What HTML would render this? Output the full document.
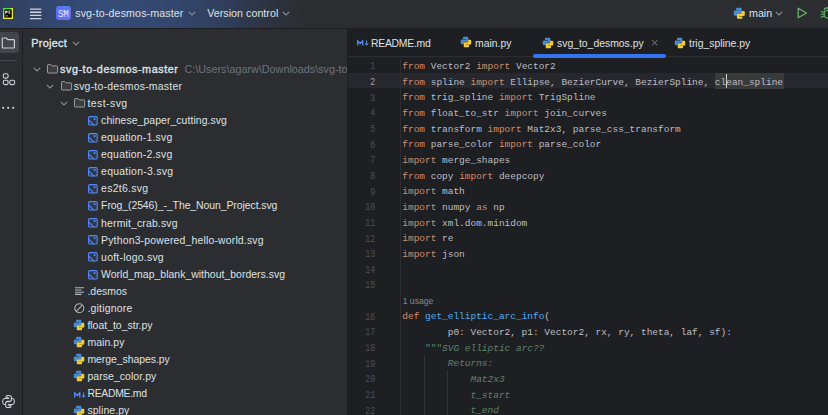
<!DOCTYPE html>
<html><head><meta charset="utf-8">
<style>
*{margin:0;padding:0;box-sizing:border-box}
html,body{width:828px;height:415px;overflow:hidden;background:#1e1f22}
body{position:relative;font-family:"Liberation Sans",sans-serif;color:#dfe1e5}
.abs{position:absolute}
#hdr{left:0;top:0;width:828px;height:29px;background:#2b2d30;overflow:hidden;border-bottom:1px solid #1e1f22}
#hdrgrad{left:0;top:0;width:828px;height:28px;background:radial-gradient(circle 195px at 110px 14px, rgb(53,76,120) 0%, rgb(51,71,110) 30%, rgb(48,64,94) 55%, rgb(45,52,66) 80%, rgb(43,45,48) 100%)}
.ht{position:absolute;font-size:10.7px;color:#dfe1e5;white-space:nowrap;line-height:14px;top:6px}
#strip{left:0;top:29px;width:23px;height:386px;background:#2b2d30;border-right:1px solid #1e1f22}
#proj{left:23px;top:29px;width:324px;height:386px;background:#2b2d30;overflow:hidden}
#edsep{left:347px;top:29px;width:1px;height:386px;background:#1e1f22}
#tabs{left:348px;top:29px;width:480px;height:28px;background:#1e1f22;border-bottom:1px solid #2b2d30}
.tab{position:absolute;top:36.5px;font-size:10.4px;line-height:14px;color:#dfe1e5;white-space:nowrap}
.row{position:absolute;height:17px;line-height:17px;white-space:nowrap;color:#dfe1e5}
.path{color:#6f737a;-webkit-text-stroke:0;font-size:10.8px;margin-left:6px;letter-spacing:0}
#treeclip{position:absolute;left:0;top:0;width:347px;height:415px;overflow:hidden}
.code{position:absolute;left:402.3px;font-family:"Liberation Mono",monospace;font-size:9.48px;white-space:pre;color:#bcbec4;height:15.65px;line-height:15.65px}
.ln{position:absolute;left:348px;width:27.3px;text-align:right;font-family:"Liberation Mono",monospace;font-size:10.5px;transform:scaleX(.79);transform-origin:right center;color:#4b5059;height:15.65px;line-height:15.65px}
.ln.cur{color:#a1a3ab}
.usage{position:absolute;left:402.7px;font-size:8.6px;color:#868a91;height:15.65px;line-height:15.65px}
.k{color:#cf8e6d}
.f{color:#56a8f5}
.d{color:#5f826b;font-style:italic}
.ds{color:#5f826b}
.sel{background:#373b39;position:relative}
.caret{position:absolute;left:5.7px;top:2px;width:1px;height:12px;background:#ced0d6}
#curline{left:348px;top:72.5px;width:480px;height:15.8px;background:#26282e}
#gsep{left:400.4px;top:57px;width:1px;height:358px;background:#2b2d30}
</style></head><body>
<div id="hdr" class="abs">
  <div id="hdrgrad" class="abs"></div>
</div>
<!-- header content -->
<svg width="11" height="11" viewBox="0 0 10 11" style="position:absolute;left:3px;top:8px;width:10px;height:11px"><rect x="0" y="0" width="10" height="11" fill="#ece831"/><path d="M0 0H7.5V1.3H1.3V5.5H0Z" fill="#4fdc43"/><rect x="1.3" y="1.3" width="7.4" height="8.3" fill="#050505"/><path d="M2.2 2.8h1.6q1 0 1 1t-1 1H3v1H2.2z M5.5 3.5q0-.9 1-.9h.8v.8h-.8v1.6h.8v.8h-.8q-1 0-1-.9z" fill="#e8e8e8"/><path d="M2.4 7.9h2.6" stroke="#ddd" stroke-width=".7"/></svg>
<svg width="13" height="12" viewBox="0 0 13 12" style="position:absolute;left:30px;top:7.5px"><path d="M0 1.1H11.3M0 4.2H11.3M0 7.3H11.3M0 10.6H11.3" stroke="#d0d4da" stroke-width="1.35"/></svg>
<div style="position:absolute;left:56px;top:6px;width:14.7px;height:14px;border-radius:3px;background:linear-gradient(35deg,#5d6cf5,#5a74f4 60%,#4f86f0)"></div>
<div style="position:absolute;left:56.2px;top:7.4px;width:14.5px;height:14.5px;line-height:14.5px;text-align:center;font-family:'Liberation Mono',monospace;font-size:11.1px;color:#e8ecff;letter-spacing:-.2px;transform:scaleX(.83)">SM</div>
<div class="ht" style="left:75.2px;letter-spacing:.1px">svg-to-desmos-master</div>
<svg width="8" height="5" viewBox="0 0 8 5" style="position:absolute;left:187.5px;top:10.8px"><path d="M.8 .8 L4 4 L7.2 .8" fill="none" stroke="#8c8e94" stroke-width="1.1"/></svg>
<div class="ht" style="left:207.2px;letter-spacing:.03px">Version control</div>
<svg width="8" height="5" viewBox="0 0 8 5" style="position:absolute;left:281.5px;top:10.8px"><path d="M.8 .8 L4 4 L7.2 .8" fill="none" stroke="#8c8e94" stroke-width="1.1"/></svg>
<svg viewBox="0 0 16 16" width="12.6" height="12.6" style="position:absolute;left:732.9px;top:7px"><path d="M5 1H10Q11 1 11 2V6.8Q11 7.8 10 7.8H6.2Q5.2 7.8 5.2 8.8V11H2.5Q1 11 1 9.5V6Q1 4.5 2.5 4.5H8V4H4V2Q4 1 5 1Z" fill="#4a8bd0"/><path d="M11 15H6Q5 15 5 14V9.2Q5 8.2 6 8.2H9.8Q10.8 8.2 10.8 7.2V5H13.5Q15 5 15 6.5V10Q15 11.5 13.5 11.5H8V12H12V14Q12 15 11 15Z" fill="#f2cb38"/></svg>
<div class="ht" style="left:749px">main</div>
<svg width="8" height="5" viewBox="0 0 8 5" style="position:absolute;left:774.5px;top:10.8px"><path d="M.8 .8 L4 4 L7.2 .8" fill="none" stroke="#8c8e94" stroke-width="1.1"/></svg>
<svg width="11" height="12" viewBox="0 0 11 12" style="position:absolute;left:797px;top:7px"><path d="M1.2 1.2 L9.6 6 L1.2 10.8 Z" fill="none" stroke="#5fb865" stroke-width="1.3" stroke-linejoin="round"/></svg>
<svg width="12" height="14" viewBox="0 0 12 14" style="position:absolute;left:820px;top:6px"><path d="M4.3 4.2A2.3 2.3 0 0 1 8.9 4.2" fill="none" stroke="#5fb865" stroke-width="1.2"/><rect x="4.2" y="4.5" width="8" height="7.5" rx="3.2" fill="none" stroke="#5fb865" stroke-width="1.2"/><path d="M.8 5.2L4.2 6.4M.6 8.2H4.2M.8 11.2L4.2 10" stroke="#5fb865" stroke-width="1.1"/></svg>

<div id="strip" class="abs"></div>
<div style="position:absolute;left:-4px;top:32px;width:22.7px;height:21px;border-radius:4px;background:#43454a"></div>
<svg width="15" height="12" viewBox="0 0 15 12" style="position:absolute;left:1px;top:36.5px"><path d="M1.3 1.8 Q1.3 1 2.1 1 H5.3 L6.8 2.7 H12.6 Q13.4 2.7 13.4 3.5 V10.2 Q13.4 11 12.6 11 H2.1 Q1.3 11 1.3 10.2 Z" fill="none" stroke="#ced0d6" stroke-width="1.2"/></svg>
<div style="position:absolute;left:0;top:60.3px;width:16.5px;height:1px;background:#43454a"></div>
<svg width="14" height="14" viewBox="0 0 14 14" style="position:absolute;left:1.5px;top:72px"><rect x="1.3" y="1.8" width="4.8" height="4.3" rx="1.5" fill="none" stroke="#ced0d6" stroke-width="1.1"/><rect x="1.3" y="8.3" width="4.8" height="4.3" rx="1.5" fill="none" stroke="#ced0d6" stroke-width="1.1"/><rect x="7.8" y="8.3" width="4.8" height="4.3" rx="1.5" fill="none" stroke="#ced0d6" stroke-width="1.1"/></svg>
<svg width="14" height="4" viewBox="0 0 14 4" style="position:absolute;left:2px;top:105.5px"><circle cx="1.2" cy="1.8" r="1.1" fill="#ced0d6"/><circle cx="6.2" cy="1.8" r="1.1" fill="#ced0d6"/><circle cx="11.2" cy="1.8" r="1.1" fill="#ced0d6"/></svg>
<svg width="15" height="15" viewBox="0 0 16 16" style="position:absolute;left:1px;top:394px"><path d="M7.9 1.5C5.3 1.5 5.4 2.7 5.4 2.7V4.3H8.2V4.8H4S1.8 4.6 1.8 8c0 3.3 1.9 3.2 1.9 3.2H5V9.6S4.9 7.8 6.8 7.8H9.3S11 7.8 11 6.1V3S11.2 1.5 7.9 1.5Z M8.1 14.5c2.6 0 2.5-1.2 2.5-1.2V11.7H7.8V11.2H12S14.2 11.4 14.2 8c0-3.300-1.9-3.200-1.9-3.200H11V6.4S11.1 8.2 9.2 8.2H6.7S5 8.2 5 9.9V13S4.8 14.5 8.1 14.5Z" fill="none" stroke="#ced0d6" stroke-width="1.1"/><circle cx="7" cy="3.3" r=".6" fill="#ced0d6"/><circle cx="9" cy="12.7" r=".6" fill="#ced0d6"/></svg>

<div id="proj" class="abs"></div>
<div style="position:absolute;left:31.3px;top:36px;font-size:10.9px;line-height:14px;color:#dfe1e5;-webkit-text-stroke:.35px #dfe1e5;letter-spacing:.25px">Project</div>
<svg width="8" height="5" viewBox="0 0 8 5" style="position:absolute;left:71.5px;top:41px"><path d="M.8 .8 L4 4 L7.2 .8" fill="none" stroke="#8c8e94" stroke-width="1.1"/></svg>
<div id="treeclip">
<svg width="8" height="5" viewBox="0 0 8 5" style="position:absolute;left:32.6px;top:66.6px"><path d="M.8 .8 L4 4 L7.2 .8" fill="none" stroke="#8c8e94" stroke-width="1.1"/></svg>
<svg width="12" height="10" viewBox="0 0 12 10" style="position:absolute;left:47.0px;top:64.0px"><path d="M.5 1.3 Q.5 .6 1.2 .6 H3.9 L5.1 1.9 H9.9 Q10.6 1.9 10.6 2.6 V8.3 Q10.6 9 9.9 9 H1.2 Q.5 9 .5 8.3 Z" fill="#3a3c40" stroke="#9a9ca2" stroke-width="1"/></svg>
<div class="row" style="left:60.0px;top:61.0px;font-size:10.8px;-webkit-text-stroke:.35px #dfe1e5;letter-spacing:.55px">svg-to-desmos-master<span class="path">C:\Users\agarw\Downloads\svg-to-desmos-master</span></div>
<svg width="8" height="5" viewBox="0 0 8 5" style="position:absolute;left:46.3px;top:83.66px"><path d="M.8 .8 L4 4 L7.2 .8" fill="none" stroke="#8c8e94" stroke-width="1.1"/></svg>
<svg width="12" height="10" viewBox="0 0 12 10" style="position:absolute;left:60.7px;top:81.06px"><path d="M.5 1.3 Q.5 .6 1.2 .6 H3.9 L5.1 1.9 H9.9 Q10.6 1.9 10.6 2.6 V8.3 Q10.6 9 9.9 9 H1.2 Q.5 9 .5 8.3 Z" fill="#3a3c40" stroke="#9a9ca2" stroke-width="1"/></svg>
<div class="row" style="left:73.7px;top:78.06px;font-size:10.45px;letter-spacing:0.232px">svg-to-desmos-master</div>
<svg width="8" height="5" viewBox="0 0 8 5" style="position:absolute;left:60.0px;top:100.72px"><path d="M.8 .8 L4 4 L7.2 .8" fill="none" stroke="#8c8e94" stroke-width="1.1"/></svg>
<svg width="12" height="10" viewBox="0 0 12 10" style="position:absolute;left:74.4px;top:98.12px"><path d="M.5 1.3 Q.5 .6 1.2 .6 H3.9 L5.1 1.9 H9.9 Q10.6 1.9 10.6 2.6 V8.3 Q10.6 9 9.9 9 H1.2 Q.5 9 .5 8.3 Z" fill="#3a3c40" stroke="#9a9ca2" stroke-width="1"/></svg>
<div class="row" style="left:87.4px;top:95.12px;font-size:10.45px;letter-spacing:0.457px">test-svg</div>
<svg width="10" height="10" viewBox="0 0 10 10" style="position:absolute;left:87.6px;top:115.98px"><rect x=".6" y=".6" width="8.6" height="8.4" rx="1.3" fill="rgba(84,138,247,.12)" stroke="#548af7" stroke-width="1.1"/><path d="M.8 4.2 L5.9 9.2" stroke="#548af7" stroke-width="1.1"/><circle cx="6.6" cy="3.1" r="1.05" fill="#548af7"/></svg>
<div class="row" style="left:101.1px;top:112.18px;font-size:10.45px;letter-spacing:0.067px">chinese_paper_cutting.svg</div>
<svg width="10" height="10" viewBox="0 0 10 10" style="position:absolute;left:87.6px;top:133.04px"><rect x=".6" y=".6" width="8.6" height="8.4" rx="1.3" fill="rgba(84,138,247,.12)" stroke="#548af7" stroke-width="1.1"/><path d="M.8 4.2 L5.9 9.2" stroke="#548af7" stroke-width="1.1"/><circle cx="6.6" cy="3.1" r="1.05" fill="#548af7"/></svg>
<div class="row" style="left:101.1px;top:129.24px;font-size:10.45px;letter-spacing:0.208px">equation-1.svg</div>
<svg width="10" height="10" viewBox="0 0 10 10" style="position:absolute;left:87.6px;top:150.1px"><rect x=".6" y=".6" width="8.6" height="8.4" rx="1.3" fill="rgba(84,138,247,.12)" stroke="#548af7" stroke-width="1.1"/><path d="M.8 4.2 L5.9 9.2" stroke="#548af7" stroke-width="1.1"/><circle cx="6.6" cy="3.1" r="1.05" fill="#548af7"/></svg>
<div class="row" style="left:101.1px;top:146.3px;font-size:10.45px;letter-spacing:0.208px">equation-2.svg</div>
<svg width="10" height="10" viewBox="0 0 10 10" style="position:absolute;left:87.6px;top:167.16px"><rect x=".6" y=".6" width="8.6" height="8.4" rx="1.3" fill="rgba(84,138,247,.12)" stroke="#548af7" stroke-width="1.1"/><path d="M.8 4.2 L5.9 9.2" stroke="#548af7" stroke-width="1.1"/><circle cx="6.6" cy="3.1" r="1.05" fill="#548af7"/></svg>
<div class="row" style="left:101.1px;top:163.36px;font-size:10.45px;letter-spacing:0.262px">equation-3.svg</div>
<svg width="10" height="10" viewBox="0 0 10 10" style="position:absolute;left:87.6px;top:184.22px"><rect x=".6" y=".6" width="8.6" height="8.4" rx="1.3" fill="rgba(84,138,247,.12)" stroke="#548af7" stroke-width="1.1"/><path d="M.8 4.2 L5.9 9.2" stroke="#548af7" stroke-width="1.1"/><circle cx="6.6" cy="3.1" r="1.05" fill="#548af7"/></svg>
<div class="row" style="left:101.1px;top:180.42px;font-size:10.45px;letter-spacing:0.275px">es2t6.svg</div>
<svg width="10" height="10" viewBox="0 0 10 10" style="position:absolute;left:87.6px;top:201.28px"><rect x=".6" y=".6" width="8.6" height="8.4" rx="1.3" fill="rgba(84,138,247,.12)" stroke="#548af7" stroke-width="1.1"/><path d="M.8 4.2 L5.9 9.2" stroke="#548af7" stroke-width="1.1"/><circle cx="6.6" cy="3.1" r="1.05" fill="#548af7"/></svg>
<div class="row" style="left:101.1px;top:197.48px;font-size:10.45px;letter-spacing:-0.073px">Frog_(2546)_-_The_Noun_Project.svg</div>
<svg width="10" height="10" viewBox="0 0 10 10" style="position:absolute;left:87.6px;top:218.34px"><rect x=".6" y=".6" width="8.6" height="8.4" rx="1.3" fill="rgba(84,138,247,.12)" stroke="#548af7" stroke-width="1.1"/><path d="M.8 4.2 L5.9 9.2" stroke="#548af7" stroke-width="1.1"/><circle cx="6.6" cy="3.1" r="1.05" fill="#548af7"/></svg>
<div class="row" style="left:101.1px;top:214.54px;font-size:10.45px;letter-spacing:0.15px">hermit_crab.svg</div>
<svg width="10" height="10" viewBox="0 0 10 10" style="position:absolute;left:87.6px;top:235.4px"><rect x=".6" y=".6" width="8.6" height="8.4" rx="1.3" fill="rgba(84,138,247,.12)" stroke="#548af7" stroke-width="1.1"/><path d="M.8 4.2 L5.9 9.2" stroke="#548af7" stroke-width="1.1"/><circle cx="6.6" cy="3.1" r="1.05" fill="#548af7"/></svg>
<div class="row" style="left:101.1px;top:231.6px;font-size:10.45px;letter-spacing:0.173px">Python3-powered_hello-world.svg</div>
<svg width="10" height="10" viewBox="0 0 10 10" style="position:absolute;left:87.6px;top:252.46px"><rect x=".6" y=".6" width="8.6" height="8.4" rx="1.3" fill="rgba(84,138,247,.12)" stroke="#548af7" stroke-width="1.1"/><path d="M.8 4.2 L5.9 9.2" stroke="#548af7" stroke-width="1.1"/><circle cx="6.6" cy="3.1" r="1.05" fill="#548af7"/></svg>
<div class="row" style="left:101.1px;top:248.66px;font-size:10.45px;letter-spacing:0.233px">uoft-logo.svg</div>
<svg width="10" height="10" viewBox="0 0 10 10" style="position:absolute;left:87.6px;top:269.52px"><rect x=".6" y=".6" width="8.6" height="8.4" rx="1.3" fill="rgba(84,138,247,.12)" stroke="#548af7" stroke-width="1.1"/><path d="M.8 4.2 L5.9 9.2" stroke="#548af7" stroke-width="1.1"/><circle cx="6.6" cy="3.1" r="1.05" fill="#548af7"/></svg>
<div class="row" style="left:101.1px;top:265.72px;font-size:10.45px;letter-spacing:0.024px">World_map_blank_without_borders.svg</div>
<svg width="10" height="9" viewBox="0 0 10 9" style="position:absolute;left:75.0px;top:286.97999999999996px"><path d="M0 .8H9M0 3H6.5M0 5.2H9M0 7.4H6.5" stroke="#b4b6bc" stroke-width="1.1"/></svg>
<div class="row" style="left:87.4px;top:282.78px;font-size:10.45px;letter-spacing:0.017px">.desmos</div>
<svg width="11" height="11" viewBox="0 0 11 11" style="position:absolute;left:74.1px;top:302.84px"><circle cx="5.3" cy="5.3" r="4.5" fill="none" stroke="#b4b6bc" stroke-width="1.1"/><path d="M2.2 8.4 L8.4 2.2" stroke="#b4b6bc" stroke-width="1.1"/></svg>
<div class="row" style="left:87.4px;top:299.84px;font-size:10.45px;letter-spacing:0.211px">.gitignore</div>
<svg viewBox="0 0 16 16" width="12.1" height="12.1" style="position:absolute;left:73.1px;top:319.3px"><path d="M5 1H10Q11 1 11 2V6.8Q11 7.8 10 7.8H6.2Q5.2 7.8 5.2 8.8V11H2.5Q1 11 1 9.5V6Q1 4.5 2.5 4.5H8V4H4V2Q4 1 5 1Z" fill="#4a8bd0"/><path d="M11 15H6Q5 15 5 14V9.2Q5 8.2 6 8.2H9.8Q10.8 8.2 10.8 7.2V5H13.5Q15 5 15 6.5V10Q15 11.5 13.5 11.5H8V12H12V14Q12 15 11 15Z" fill="#f2cb38"/></svg>
<div class="row" style="left:87.4px;top:316.9px;font-size:10.45px;letter-spacing:0.007px">float_to_str.py</div>
<svg viewBox="0 0 16 16" width="12.1" height="12.1" style="position:absolute;left:73.1px;top:336.36px"><path d="M5 1H10Q11 1 11 2V6.8Q11 7.8 10 7.8H6.2Q5.2 7.8 5.2 8.8V11H2.5Q1 11 1 9.5V6Q1 4.5 2.5 4.5H8V4H4V2Q4 1 5 1Z" fill="#4a8bd0"/><path d="M11 15H6Q5 15 5 14V9.2Q5 8.2 6 8.2H9.8Q10.8 8.2 10.8 7.2V5H13.5Q15 5 15 6.5V10Q15 11.5 13.5 11.5H8V12H12V14Q12 15 11 15Z" fill="#f2cb38"/></svg>
<div class="row" style="left:87.4px;top:333.96px;font-size:10.45px;letter-spacing:0.083px">main.py</div>
<svg viewBox="0 0 16 16" width="12.1" height="12.1" style="position:absolute;left:73.1px;top:353.42px"><path d="M5 1H10Q11 1 11 2V6.8Q11 7.8 10 7.8H6.2Q5.2 7.8 5.2 8.8V11H2.5Q1 11 1 9.5V6Q1 4.5 2.5 4.5H8V4H4V2Q4 1 5 1Z" fill="#4a8bd0"/><path d="M11 15H6Q5 15 5 14V9.2Q5 8.2 6 8.2H9.8Q10.8 8.2 10.8 7.2V5H13.5Q15 5 15 6.5V10Q15 11.5 13.5 11.5H8V12H12V14Q12 15 11 15Z" fill="#f2cb38"/></svg>
<div class="row" style="left:87.4px;top:351.02px;font-size:10.45px;letter-spacing:-0.043px">merge_shapes.py</div>
<svg viewBox="0 0 16 16" width="12.1" height="12.1" style="position:absolute;left:73.1px;top:370.48px"><path d="M5 1H10Q11 1 11 2V6.8Q11 7.8 10 7.8H6.2Q5.2 7.8 5.2 8.8V11H2.5Q1 11 1 9.5V6Q1 4.5 2.5 4.5H8V4H4V2Q4 1 5 1Z" fill="#4a8bd0"/><path d="M11 15H6Q5 15 5 14V9.2Q5 8.2 6 8.2H9.8Q10.8 8.2 10.8 7.2V5H13.5Q15 5 15 6.5V10Q15 11.5 13.5 11.5H8V12H12V14Q12 15 11 15Z" fill="#f2cb38"/></svg>
<div class="row" style="left:87.4px;top:368.08px;font-size:10.45px;letter-spacing:0.077px">parse_color.py</div>
<svg width="12" height="6" viewBox="0 0 12 6" style="position:absolute;left:73.5px;top:391.64px;overflow:visible"><path d="M.7 5.5V.9L3.2 3.5 5.7 .9V5.5" fill="none" stroke="#548af7" stroke-width="1.35"/><path d="M9.6 .4V5.1M8.1 3.5L9.6 5.1 11.1 3.5" fill="none" stroke="#548af7" stroke-width="1.05"/></svg>
<div class="row" style="left:87.4px;top:385.14px;font-size:10.45px;letter-spacing:-0.3px">README.md</div>
<svg viewBox="0 0 16 16" width="12.1" height="12.1" style="position:absolute;left:73.1px;top:404.6px"><path d="M5 1H10Q11 1 11 2V6.8Q11 7.8 10 7.8H6.2Q5.2 7.8 5.2 8.8V11H2.5Q1 11 1 9.5V6Q1 4.5 2.5 4.5H8V4H4V2Q4 1 5 1Z" fill="#4a8bd0"/><path d="M11 15H6Q5 15 5 14V9.2Q5 8.2 6 8.2H9.8Q10.8 8.2 10.8 7.2V5H13.5Q15 5 15 6.5V10Q15 11.5 13.5 11.5H8V12H12V14Q12 15 11 15Z" fill="#f2cb38"/></svg>
<div class="row" style="left:87.4px;top:402.2px;font-size:10.45px;letter-spacing:0.087px">spline.py</div>
</div>
<div id="edsep" class="abs"></div>

<div id="tabs" class="abs"></div>
<svg width="12" height="6" viewBox="0 0 12 6" style="position:absolute;left:356.5px;top:40.2px;overflow:visible"><path d="M.7 5.5V.9L3.2 3.5 5.7 .9V5.5" fill="none" stroke="#548af7" stroke-width="1.35"/><path d="M9.6 .4V5.1M8.1 3.5L9.6 5.1 11.1 3.5" fill="none" stroke="#548af7" stroke-width="1.05"/></svg>
<div class="tab" style="left:371px;letter-spacing:-.25px">README.md</div>
<svg viewBox="0 0 16 16" width="12" height="12" style="position:absolute;left:460.3px;top:36.4px"><path d="M5 1H10Q11 1 11 2V6.8Q11 7.8 10 7.8H6.2Q5.2 7.8 5.2 8.8V11H2.5Q1 11 1 9.5V6Q1 4.5 2.5 4.5H8V4H4V2Q4 1 5 1Z" fill="#4a8bd0"/><path d="M11 15H6Q5 15 5 14V9.2Q5 8.2 6 8.2H9.8Q10.8 8.2 10.8 7.2V5H13.5Q15 5 15 6.5V10Q15 11.5 13.5 11.5H8V12H12V14Q12 15 11 15Z" fill="#f2cb38"/></svg>
<div class="tab" style="left:475px">main.py</div>
<svg viewBox="0 0 16 16" width="12" height="12" style="position:absolute;left:542.3px;top:36.5px"><path d="M5 1H10Q11 1 11 2V6.8Q11 7.8 10 7.8H6.2Q5.2 7.8 5.2 8.8V11H2.5Q1 11 1 9.5V6Q1 4.5 2.5 4.5H8V4H4V2Q4 1 5 1Z" fill="#4a8bd0"/><path d="M11 15H6Q5 15 5 14V9.2Q5 8.2 6 8.2H9.8Q10.8 8.2 10.8 7.2V5H13.5Q15 5 15 6.5V10Q15 11.5 13.5 11.5H8V12H12V14Q12 15 11 15Z" fill="#f2cb38"/></svg>
<div class="tab" style="left:557px">svg_to_desmos.py</div>
<svg width="8" height="8" viewBox="0 0 8 8" style="position:absolute;left:650.8px;top:39.2px"><path d="M1 1L6.4 6.4M6.4 1L1 6.4" stroke="#7f8188" stroke-width=".95"/></svg>
<div style="position:absolute;left:533px;top:54px;width:133px;height:3.5px;border-radius:2px;background:#3574f0"></div>
<svg viewBox="0 0 16 16" width="12" height="12" style="position:absolute;left:674px;top:36.6px"><path d="M5 1H10Q11 1 11 2V6.8Q11 7.8 10 7.8H6.2Q5.2 7.8 5.2 8.8V11H2.5Q1 11 1 9.5V6Q1 4.5 2.5 4.5H8V4H4V2Q4 1 5 1Z" fill="#4a8bd0"/><path d="M11 15H6Q5 15 5 14V9.2Q5 8.2 6 8.2H9.8Q10.8 8.2 10.8 7.2V5H13.5Q15 5 15 6.5V10Q15 11.5 13.5 11.5H8V12H12V14Q12 15 11 15Z" fill="#f2cb38"/></svg>
<div class="tab" style="left:689px">trig_spline.py</div>

<div id="curline" class="abs"></div>
<div id="gsep" class="abs"></div>
<div style="position:absolute;left:424px;top:354.5px;width:1px;height:61px;background:#313338"></div>
<div style="position:absolute;left:446.5px;top:370px;width:1px;height:45px;background:#313338"></div>
<div class="ln" style="top:59.3px">1</div>
<div class="code" style="top:59.0px"><span class="k">from</span> Vector2 <span class="k">import</span> Vector2</div>
<div class="ln cur" style="top:74.96px">2</div>
<div style="position:absolute;left:714.8px;top:73.06px;width:69px;height:15.5px;background:#393b3b"></div>
<div style="position:absolute;left:726px;top:74.46px;width:1px;height:13.3px;background:#ced0d6;z-index:3"></div>
<div class="code" style="top:74.66px"><span class="k">from</span> spline <span class="k">import</span> Ellipse, BezierCurve, BezierSpline, clean_spline</div>
<div class="ln" style="top:90.61px">3</div>
<div class="code" style="top:90.31px"><span class="k">from</span> trig_spline <span class="k">import</span> TrigSpline</div>
<div class="ln" style="top:106.27px">4</div>
<div class="code" style="top:105.97px"><span class="k">from</span> float_to_str <span class="k">import</span> join_curves</div>
<div class="ln" style="top:121.92px">5</div>
<div class="code" style="top:121.62px"><span class="k">from</span> transform <span class="k">import</span> Mat2x3, parse_css_transform</div>
<div class="ln" style="top:137.57px">6</div>
<div class="code" style="top:137.27px"><span class="k">from</span> parse_color <span class="k">import</span> parse_color</div>
<div class="ln" style="top:153.23px">7</div>
<div class="code" style="top:152.93px"><span class="k">import</span> merge_shapes</div>
<div class="ln" style="top:168.88px">8</div>
<div class="code" style="top:168.58px"><span class="k">from</span> copy <span class="k">import</span> deepcopy</div>
<div class="ln" style="top:184.54px">9</div>
<div class="code" style="top:184.24px"><span class="k">import</span> math</div>
<div class="ln" style="top:200.19px">10</div>
<div class="code" style="top:199.89px"><span class="k">import</span> numpy <span class="k">as</span> np</div>
<div class="ln" style="top:215.85px">11</div>
<div class="code" style="top:215.55px"><span class="k">import</span> xml.dom.minidom</div>
<div class="ln" style="top:231.5px">12</div>
<div class="code" style="top:231.2px"><span class="k">import</span> re</div>
<div class="ln" style="top:247.16px">13</div>
<div class="code" style="top:246.86px"><span class="k">import</span> json</div>
<div class="ln" style="top:262.81px">14</div>
<div class="code" style="top:262.51px"></div>
<div class="ln" style="top:278.47px">15</div>
<div class="code" style="top:278.17px"></div>
<div class="usage" style="top:294.22px">1 usage</div>
<div class="ln" style="top:309.78px">16</div>
<div class="code" style="top:309.48px"><span class="k">def</span> <span class="f">get_elliptic_arc_info</span>(</div>
<div class="ln" style="top:325.43px">17</div>
<div class="code" style="top:325.13px">        p0: Vector2, p1: Vector2, rx, ry, theta, laf, sf):</div>
<div class="ln" style="top:341.09px">18</div>
<div class="code" style="top:340.79px">    <span class="ds">"""</span><span class="d">SVG elliptic arc??</span></div>
<div class="ln" style="top:356.74px">19</div>
<div class="code" style="top:356.44px">        <span class="d">Returns:</span></div>
<div class="ln" style="top:372.4px">20</div>
<div class="code" style="top:372.1px">            <span class="d">Mat2x3</span></div>
<div class="ln" style="top:388.05px">21</div>
<div class="code" style="top:387.75px">            <span class="d">t_start</span></div>
<div class="ln" style="top:403.71px">22</div>
<div class="code" style="top:403.41px">            <span class="d">t_end</span></div>
</body></html>
